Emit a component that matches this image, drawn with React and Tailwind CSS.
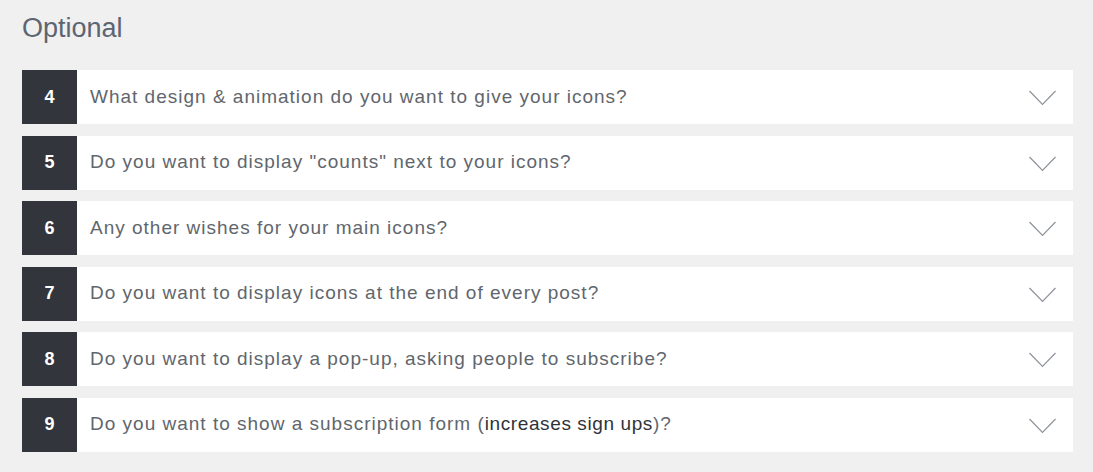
const questions = [
  { n: 4, text: "What design & animation do you want to give your icons?" },
  { n: 5, text: 'Do you want to display "counts" next to your icons?' },
  { n: 6, text: "Any other wishes for your main icons?" },
  { n: 7, text: "Do you want to display icons at the end of every post?" },
  { n: 8, text: "Do you want to display a pop-up, asking people to subscribe?" },
  {
    n: 9,
    text: (
      <>
        Do you want to show a subscription form (
        <span className="tracking-[0.6px] text-[#2f3339]">increases sign ups</span>)?
      </>
    ),
  },
];

export default function App() {
  return (
    <div className="min-h-screen bg-[#f0f0f0] pl-[22px] pr-[20px] pt-[12px] font-['Helvetica_Neue','Liberation_Sans',Arial,sans-serif] font-light">
      <h2 className="text-[27px] leading-[32px] text-[#5d6570] mb-[26px]">Optional</h2>

      <div className="flex flex-col gap-[11.5px]">
        {questions.map((q) => (
          <div key={q.n} className="flex h-[54px] bg-white items-stretch">
            <div className="w-[55px] bg-[#32363c] text-white flex items-center justify-center text-[18px] font-semibold">
              {q.n}
            </div>
            <div className="flex-1 flex items-center pl-[13px] text-[19px] tracking-[1px] text-[#61666d]">
              {q.text}
            </div>
            <div className="flex items-center justify-end pr-[17px] pt-[2px]">
              <svg width="27" height="16" viewBox="0 0 27 16" fill="none" stroke="#8d9299" strokeWidth="1.2">
                <path d="M0.5 1 L13.5 14.5 L26.5 1" />
              </svg>
            </div>
          </div>
        ))}
      </div>
    </div>
  );
}
